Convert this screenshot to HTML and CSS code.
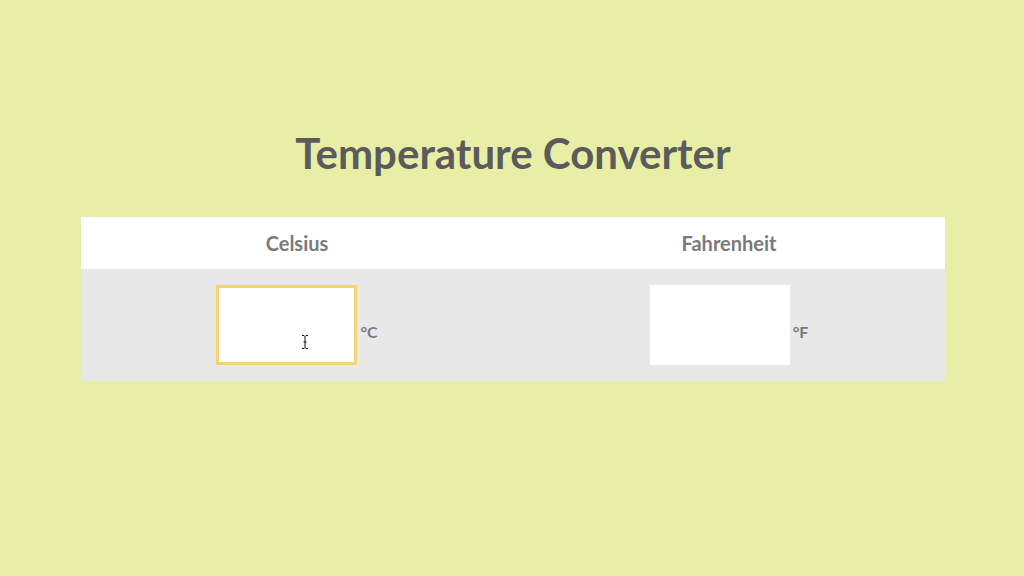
FILE: index.html
```html
<!DOCTYPE html>
<html lang="en">
<head>
<meta charset="utf-8">
<title>Temperature Converter</title>
<link rel="stylesheet" href="styles.css">
</head>
<body>
<main class="page">
  <h1 class="title">Temperature Converter</h1>
  <table class="converter">
    <thead>
      <tr>
        <th>Celsius</th>
        <th>Fahrenheit</th>
      </tr>
    </thead>
    <tbody>
      <tr>
        <td>
          <div class="field">
            <span class="input-wrap">
              <input class="temp-input focused" type="text" aria-label="Celsius">
              <svg class="ibeam" width="8" height="14" viewBox="0 0 8 14" aria-hidden="true">
                <path d="M1 0.5h2l1 1 1-1h2M4 1.5v11M1 13.5h2l1-1 1 1h2M2.5 7h3" fill="none" stroke="#111" stroke-width="1"/>
              </svg>
            </span>
            <span class="unit">°C</span>
          </div>
        </td>
        <td>
          <div class="field">
            <input class="temp-input" type="text" aria-label="Fahrenheit">
            <span class="unit">°F</span>
          </div>
        </td>
      </tr>
    </tbody>
  </table>
</main>
</body>
</html>
```

FILE: styles.css
```css
html, body {
  margin: 0;
  padding: 0;
}

body {
  background: #e9eea7;
  font-family: Lato, "Open Sans", Arial, sans-serif;
  width: 1024px;
  height: 576px;
  overflow: hidden;
}

.page {
  padding: 128px 79px 0 81px;
}

.title {
  margin: 0 0 39px;
  font-size: 42px;
  line-height: 50px;
  font-weight: 700;
  color: #5b5b5b;
  text-align: center;
}

.converter {
  width: 864px;
  border-collapse: collapse;
  table-layout: fixed;
}

.converter th {
  background: #ffffff;
  height: 52px;
  padding: 0;
  font-size: 20px;
  font-weight: 700;
  color: #7a7a7a;
  text-align: center;
  vertical-align: middle;
}

.converter td {
  background: #e8e8e8;
  padding: 16px 0;
}

.field {
  display: flex;
  justify-content: center;
  align-items: center;
  gap: 3px;
}

.input-wrap {
  position: relative;
  display: block;
}

.temp-input {
  display: block;
  box-sizing: border-box;
  width: 140px;
  height: 80px;
  margin: 0;
  border: 0;
  background: #ffffff;
  outline: none;
  font: inherit;
}

.temp-input.focused {
  width: 141px;
  border: 3px solid #f5d479;
}

.ibeam {
  position: absolute;
  left: 85px;
  top: 50px;
}

.unit {
  padding-top: 12px;
  font-size: 16px;
  font-weight: 700;
  color: #7a7a7a;
}
```
